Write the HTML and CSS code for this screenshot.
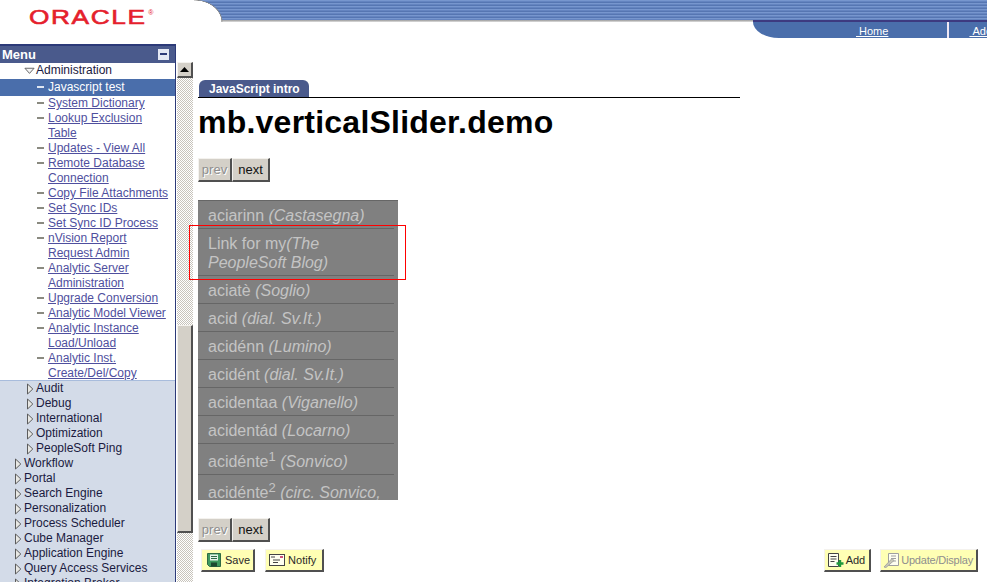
FILE: index.html
```html
<!DOCTYPE html>
<html lang="en">
<head>
<meta charset="utf-8">
<title>mb.verticalSlider.demo</title>
<link rel="stylesheet" href="styles.css">
</head>
<body>
<svg class="defs" width="0" height="0" aria-hidden="true">
  <symbol id="tri-right" viewBox="0 0 8 12"><path d="M1.5 1 L6.8 6 L1.5 11 Z" fill="#e8e8e4" stroke="#5c5c5c" stroke-width="1"/></symbol>
  <symbol id="tri-down" viewBox="0 0 12 8"><path d="M1 1 L11 1 L6 6.6 Z" fill="#f4f4f4" stroke="#5c5c5c" stroke-width="1"/></symbol>
</svg>
<header class="top">
  <div class="logo-cell"><span class="logo">ORACLE</span><span class="logo-r">®</span></div>
  <div class="top-right">
    <div class="banner"></div>
    <nav class="nav-tab">
      <a class="nav-home" href="#">&nbsp;Home</a>
      <span class="nav-sep"></span>
      <a class="nav-add" href="#">&nbsp;Add to Favorites</a>
    </nav>
  </div>
</header>
<div class="main">
  <aside class="sidebar">
    <div class="menu-title"><span>Menu</span><span class="collapse"><span class="collapse-bar"></span></span></div>
    <div class="row folder-open"><svg class="tri-d"><use href="#tri-down"/></svg><span>Administration</span></div>
    <div class="row leaf selected"><span class="dash"></span><span>Javascript test</span></div>
    <div class="row leaf"><span class="dash"></span><a href="#">System Dictionary</a></div>
    <div class="row leaf"><span class="dash"></span><a href="#">Lookup Exclusion<br>Table</a></div>
    <div class="row leaf"><span class="dash"></span><a href="#">Updates - View All</a></div>
    <div class="row leaf"><span class="dash"></span><a href="#">Remote Database<br>Connection</a></div>
    <div class="row leaf"><span class="dash"></span><a href="#">Copy File Attachments</a></div>
    <div class="row leaf"><span class="dash"></span><a href="#">Set Sync IDs</a></div>
    <div class="row leaf"><span class="dash"></span><a href="#">Set Sync ID Process</a></div>
    <div class="row leaf"><span class="dash"></span><a href="#">nVision Report<br>Request Admin</a></div>
    <div class="row leaf"><span class="dash"></span><a href="#">Analytic Server<br>Administration</a></div>
    <div class="row leaf"><span class="dash"></span><a href="#">Upgrade Conversion</a></div>
    <div class="row leaf"><span class="dash"></span><a href="#">Analytic Model Viewer</a></div>
    <div class="row leaf"><span class="dash"></span><a href="#">Analytic Instance<br>Load/Unload</a></div>
    <div class="row leaf"><span class="dash"></span><a href="#">Analytic Inst.<br>Create/Del/Copy</a></div>
    <div class="closed">
      <div class="row l1"><svg class="tri-r"><use href="#tri-right"/></svg><span>Audit</span></div>
      <div class="row l1"><svg class="tri-r"><use href="#tri-right"/></svg><span>Debug</span></div>
      <div class="row l1"><svg class="tri-r"><use href="#tri-right"/></svg><span>International</span></div>
      <div class="row l1"><svg class="tri-r"><use href="#tri-right"/></svg><span>Optimization</span></div>
      <div class="row l1"><svg class="tri-r"><use href="#tri-right"/></svg><span>PeopleSoft Ping</span></div>
      <div class="row l0"><svg class="tri-r"><use href="#tri-right"/></svg><span>Workflow</span></div>
      <div class="row l0"><svg class="tri-r"><use href="#tri-right"/></svg><span>Portal</span></div>
      <div class="row l0"><svg class="tri-r"><use href="#tri-right"/></svg><span>Search Engine</span></div>
      <div class="row l0"><svg class="tri-r"><use href="#tri-right"/></svg><span>Personalization</span></div>
      <div class="row l0"><svg class="tri-r"><use href="#tri-right"/></svg><span>Process Scheduler</span></div>
      <div class="row l0"><svg class="tri-r"><use href="#tri-right"/></svg><span>Cube Manager</span></div>
      <div class="row l0"><svg class="tri-r"><use href="#tri-right"/></svg><span>Application Engine</span></div>
      <div class="row l0"><svg class="tri-r"><use href="#tri-right"/></svg><span>Query Access Services</span></div>
      <div class="row l0"><svg class="tri-r"><use href="#tri-right"/></svg><span>Integration Broker</span></div>
    </div>
  </aside>
  <div class="scrollbar">
    <div class="scroll-track">
      <div class="scroll-btn"><svg width="9" height="5" viewBox="0 0 9 5"><path d="M4.5 0 L9 5 L0 5 Z" fill="#000"/></svg></div>
      <div class="scroll-thumb"></div>
    </div>
  </div>
  <main class="content">
    <div class="tab-line"><div class="tab">JavaScript intro</div></div>
    <h1 class="title">mb.verticalSlider.demo</h1>
    <div class="pager pager-top">
      <button class="pg pg-off" type="button">prev</button><button class="pg" type="button">next</button>
    </div>
    <div class="slider-wrap">
      <ul class="slider">
        <li>aciarinn <i>(Castasegna)</i></li>
        <li class="two">Link for my<i>(The PeopleSoft Blog)</i></li>
        <li>aciatè <i>(Soglio)</i></li>
        <li>acid <i>(dial. Sv.It.)</i></li>
        <li>acidénn <i>(Lumino)</i></li>
        <li>acidént <i>(dial. Sv.It.)</i></li>
        <li>acidentaa <i>(Viganello)</i></li>
        <li>acidentád <i>(Locarno)</i></li>
        <li class="sup">acidénte<sup>1</sup> <i>(Sonvico)</i></li>
        <li class="sup">acidénte<sup>2</sup> <i>(circ. Sonvico,</i></li>
      </ul>
      <div class="red-box"></div>
    </div>
    <div class="pager pager-bottom">
      <button class="pg pg-off" type="button">prev</button><button class="pg" type="button">next</button>
    </div>
    <div class="actions">
      <div class="act-group">
        <button class="act act-save" type="button">
          <svg width="14" height="14" viewBox="0 0 14 14"><path d="M0.5 0.5H13.5V13.5H2.5L0.5 11.5Z" fill="#3f9a5e" stroke="#2f6a45"/><rect x="3" y="1.5" width="8" height="6" fill="#e8f4ea"/><path d="M4 3.5H10M4 5.5H10" stroke="#2f6a45"/><rect x="4" y="9.5" width="6" height="4" fill="#1f4a30"/></svg>
          <span>Save</span>
        </button>
        <button class="act act-notify" type="button">
          <svg width="16" height="12" viewBox="0 0 16 12"><rect x="0.5" y="0.5" width="15" height="11" fill="#fffff0" stroke="#444"/><rect x="11" y="2" width="3" height="2" fill="#d0507a"/><path d="M2 3H6M4 6H11M4 8.5H9" stroke="#444"/></svg>
          <span>Notify</span>
        </button>
      </div>
      <div class="act-group act-right">
        <button class="act act-add" type="button">
          <svg width="16" height="15" viewBox="0 0 16 15"><path d="M0.5 0.5H10.5V13.5H0.5Z" fill="#fffff0" stroke="#444"/><path d="M2.5 3.5H8.5M2.5 6H8.5M2.5 8.5H6.5" stroke="#444"/><path d="M12 7V14M8.5 10.5H15.5" stroke="#1e9a3c" stroke-width="2.4"/></svg>
          <span>Add</span>
        </button>
        <button class="act act-off" type="button">
          <svg width="17" height="15" viewBox="0 0 17 15"><path d="M5.5 0.5H15.5V12.5H5.5Z" fill="#fffff0" stroke="#a0a0a0"/><path d="M8 3H13M8 5.5H13M10 8H13" stroke="#a0a0a0"/><path d="M1 14L9 5.5L11 7.5L3 14.5Z" fill="#c8c8b8" stroke="#9a9a9a" stroke-width="0.8"/></svg>
          <span>Update/Display</span>
        </button>
      </div>
    </div>
  </main>
</div>
</body>
</html>
```
FILE: styles.css
```css
html, body {
  margin: 0;
  padding: 0;
  height: 582px;
  overflow: hidden;
  background: #fff;
  font-family: "Liberation Sans", Arial, sans-serif;
  font-size: 12px;
  color: #000;
}
.defs { display: block; height: 0; }

/* header */
.top {
  display: flex;
  height: 44px;
}
.logo-cell {
  width: 194px;
  flex: none;
  box-sizing: border-box;
  padding: 5px 0 0 29px;
  color: #e5202c;
  line-height: 24px;
  white-space: nowrap;
  display: flex;
  align-items: flex-start;
}
.logo {
  display: block;
  font-size: 21px;
  letter-spacing: 1.3px;
  -webkit-text-stroke: 0.6px #e5202c;
  transform: scaleX(1.25);
  transform-origin: 0 0;
}
.logo-r {
  display: block;
  margin: -4px 0 0 25px;
  font-size: 7px;
}
.top-right {
  flex: 1;
  min-width: 0;
}
.banner {
  height: 22px;
  background:
    radial-gradient(ellipse 28px 22px at 0 100%, #fff 97%, #8a8a8a 99%, rgba(138,138,138,0) 103%),
    linear-gradient(#9a9a9a, #e0e0e0) 28px 100% / 100% 2px no-repeat,
    repeating-linear-gradient(#7796ce 0 1px, #6484c0 1px 2px, #5676b2 2px 3px);
}
.nav-tab {
  box-sizing: border-box;
  margin: -2px 0 0 559px;
  height: 18px;
  padding-left: 103px;
  display: flex;
  align-items: flex-start;
  background: #4a6eab;
  border-top: 2px solid #3d3a80;
  border-bottom-left-radius: 26px 16px;
  overflow: hidden;
  white-space: nowrap;
  font-size: 11px;
  line-height: 14px;
}
.nav-tab a { color: #fff; text-decoration: underline; margin-top: 2px; }
.nav-sep {
  flex: none;
  width: 2px;
  height: 16px;
  margin: 0 20px 0 59px;
  background: #f0e8f4;
}

/* main columns */
.main {
  display: flex;
  height: 538px;
  overflow: hidden;
}
.sidebar {
  width: 175px;
  flex: none;
  box-sizing: content-box;
  border-top: 2px solid #2c3a78;
  border-right: 1px solid #2c3a78;
  overflow: hidden;
  line-height: 15px;
  color: #1a1a50;
}
.menu-title {
  height: 17px;
  box-sizing: border-box;
  display: flex;
  justify-content: space-between;
  align-items: center;
  padding: 0 6px 1px 2px;
  background: #4a5a8c;
  color: #fff;
  font-weight: bold;
  font-size: 13px;
}
.collapse {
  width: 11px;
  height: 11px;
  display: flex;
  align-items: center;
  justify-content: center;
  background: #e4e8f4;
}
.collapse-bar {
  width: 7px;
  height: 2px;
  background: #2c3a78;
}
.row { display: flex; align-items: flex-start; }
.row a { color: #4f4f9e; text-decoration: underline; }
.folder-open { padding-left: 24px; height: 15px; color: #1a1a40; margin-bottom: 1px; }
.tri-d { width: 11px; height: 8px; margin: 4px 1px 0 0; flex: none; }
.leaf { padding-left: 37px; }
.dash {
  flex: none;
  width: 7px;
  height: 2px;
  margin: 6px 4px 0 0;
  background: #8a8a80;
}
.selected {
  height: 17px;
  line-height: 17px;
  background: #4a6eab;
  color: #fff;
}
.selected .dash { background: #dfe6f2; margin-top: 7px; }
.closed {
  background: #d3dbe8;
  box-shadow: 0 -1px 0 #a8bcdc;
  color: #1a1a40;
  padding-bottom: 20px;
}
.tri-r { width: 8px; height: 12px; margin: 2px 2px 0 0; flex: none; }
.l0 { padding-left: 14px; }
.l1 { padding-left: 26px; }

/* scrollbar */
.scrollbar {
  width: 17px;
  flex: none;
  box-sizing: border-box;
  padding: 18px 0 0 1px;
}
.scroll-track {
  height: 520px;
  background: repeating-conic-gradient(#c8c4bc 0 25%, #fff 0 50%) 0 0 / 2px 2px;
}
.scroll-btn, .scroll-thumb {
  box-sizing: border-box;
  background: #d4d0c8;
  border-top: 1px solid #f4f2ee;
  border-left: 1px solid #f4f2ee;
  border-right: 2px solid #505050;
  border-bottom: 2px solid #505050;
}
.scroll-btn {
  height: 16px;
  display: flex;
  align-items: center;
  justify-content: center;
}
.scroll-thumb {
  height: 208px;
  margin-top: 247px;
}

/* content */
.content {
  flex: 1;
  min-width: 0;
  box-sizing: border-box;
  padding: 36px 0 0 5px;
}
.tab-line {
  width: 542px;
  border-bottom: 1px solid #000;
  padding-left: 1px;
  box-sizing: border-box;
  height: 18px;
}
.tab {
  width: 110px;
  height: 17px;
  box-sizing: border-box;
  padding-left: 10px;
  background: #4a5a8c;
  color: #fff;
  font-weight: bold;
  font-size: 12px;
  line-height: 18px;
  border-radius: 6px 6px 0 0;
}
.title {
  margin: 6px 0 0;
  font-size: 32px;
  letter-spacing: 0.23px;
  line-height: 37px;
  font-weight: bold;
  white-space: nowrap;
}
.pager { display: flex; }
.pager-top { margin-top: 17px; }
.pager-bottom { margin-top: 18px; }
.pg {
  box-sizing: border-box;
  width: 38px;
  height: 24px;
  margin: 0;
  padding: 0;
  background: #d4d0c8;
  border-style: solid;
  border-width: 1px 2px 2px 1px;
  border-color: #f4f2ee #505050 #505050 #f4f2ee;
  font: 13px "Liberation Sans", Arial, sans-serif;
  color: #111;
}
.pg-off {
  width: 34px;
  color: #8e8e8e;
  text-shadow: 1px 1px 0 #fff;
}
.slider-wrap {
  position: relative;
  margin-top: 18px;
  width: 200px;
  height: 300px;
}
.slider {
  list-style: none;
  margin: 0;
  padding: 0 4px 0 0;
  height: 300px;
  box-sizing: border-box;
  overflow: hidden;
  background: #808080;
  border-top: 1px solid #666;
  color: #c4c4c4;
  font-size: 16px;
  line-height: 19px;
}
.slider li {
  padding: 5px 0 3px 10px;
  border-bottom: 1px solid #666;
  white-space: nowrap;
}
.slider li.two { white-space: normal; padding-right: 30px; }
.slider li.sup { line-height: 22px; padding: 7px 0 1px 10px; }
.slider sup { font-size: 13px; line-height: 0; }
.red-box {
  position: absolute;
  left: -9px;
  top: 25px;
  width: 215px;
  height: 53px;
  box-sizing: content-box;
  border: 1px solid #ff0000;
}
.actions {
  display: flex;
  justify-content: space-between;
  margin-top: 7px;
  padding: 0 9px 0 3px;
}
.act-group { display: flex; gap: 10px; }
.act-right { gap: 9px; }
.act {
  box-sizing: border-box;
  height: 23px;
  display: flex;
  align-items: center;
  margin: 0;
  background: #ffffb4;
  border-style: solid;
  border-width: 1px 2px 2px 1px;
  border-color: #f4f2ee #505050 #505050 #f4f2ee;
  font: 11px "Liberation Sans", Arial, sans-serif;
  color: #2a2a2a;
}
.act-save { gap: 4px; padding: 0 3px 0 5px; }
.act-notify { gap: 3px; padding: 0 6px 0 3px; }
.act-add { gap: 2px; padding: 0 4px 0 3px; }
.act-off { gap: 1px; padding: 0 3px 0 2px; color: #8e8e8e; letter-spacing: -0.2px; }
```
